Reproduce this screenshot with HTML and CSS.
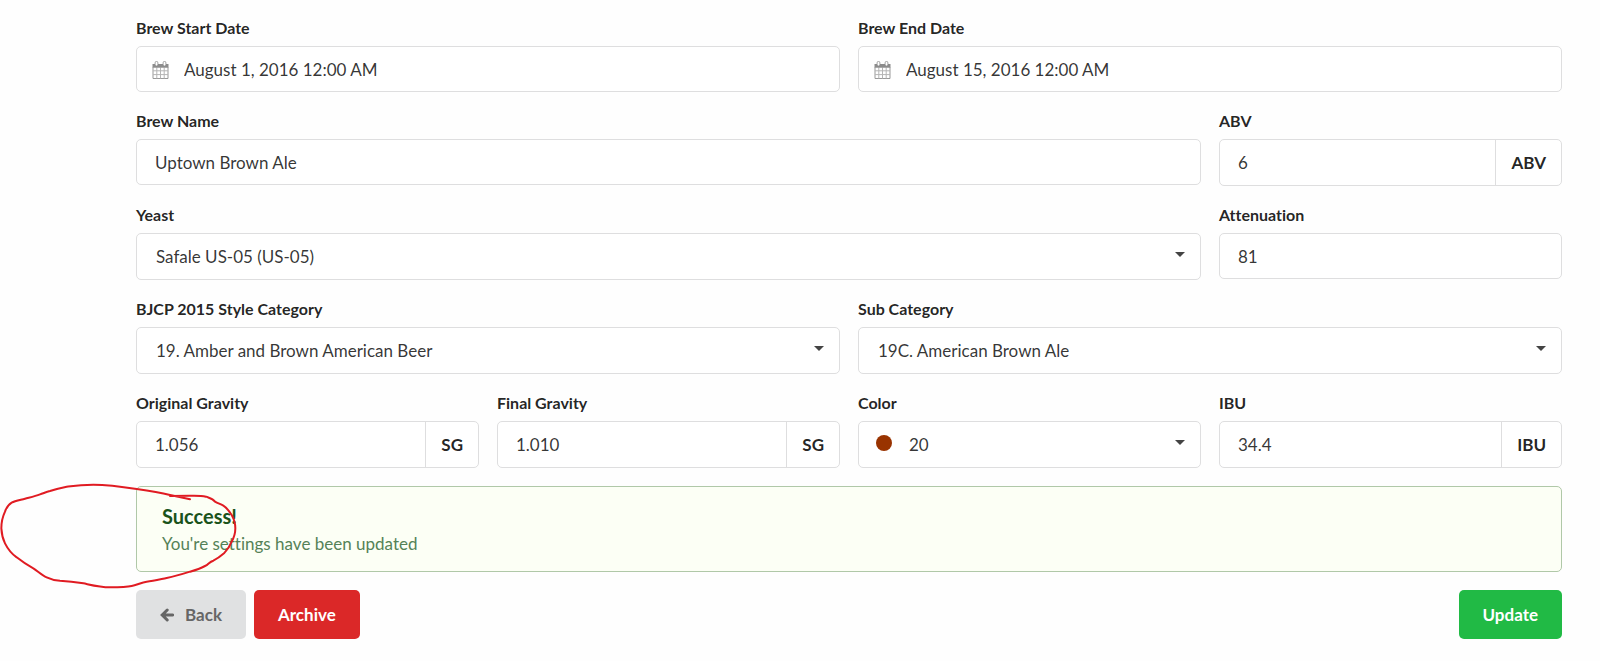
FILE: index.html
```
<!DOCTYPE html>
<html lang="en">
<head>
  <meta charset="UTF-8">
  <meta name="viewport" content="width=device-width, initial-scale=1.0">
  <title>Brew Settings</title>
  <link rel="stylesheet" href="styles.css">
</head>
<body>

<form class="brew-form">

  <!-- dates -->
  <div class="fields">
    <div class="field half">
      <label for="startDate">Brew Start Date</label>
      <div class="input icon-input">
        <svg class="calendar" viewBox="0 0 17 18" aria-hidden="true">
          <path class="sheet" d="M1 6h15v11.5H1z"/>
          <path class="grid" d="M1 9.8h15M1 13.6h15M4.8 6v11.5M8.5 6v11.5M12.2 6v11.5"/>
          <path class="top" d="M.5 3h16v3.5H.5z"/>
          <path class="ring" d="M3.1 1.8a1.4 1.4 0 0 1 2.8 0v1.8a1.4 1.4 0 0 1-2.8 0zM11.1 1.8a1.4 1.4 0 0 1 2.8 0v1.8a1.4 1.4 0 0 1-2.8 0z"/>
        </svg>
        <input type="text" id="startDate" value="August 1, 2016 12:00 AM">
      </div>
    </div>
    <div class="field half">
      <label for="endDate">Brew End Date</label>
      <div class="input icon-input">
        <svg class="calendar" viewBox="0 0 17 18" aria-hidden="true">
          <path class="sheet" d="M1 6h15v11.5H1z"/>
          <path class="grid" d="M1 9.8h15M1 13.6h15M4.8 6v11.5M8.5 6v11.5M12.2 6v11.5"/>
          <path class="top" d="M.5 3h16v3.5H.5z"/>
          <path class="ring" d="M3.1 1.8a1.4 1.4 0 0 1 2.8 0v1.8a1.4 1.4 0 0 1-2.8 0zM11.1 1.8a1.4 1.4 0 0 1 2.8 0v1.8a1.4 1.4 0 0 1-2.8 0z"/>
        </svg>
        <input type="text" id="endDate" value="August 15, 2016 12:00 AM">
      </div>
    </div>
  </div>

  <div class="fields">
    <div class="field wide">
      <label for="brewName">Brew Name</label>
      <div class="input"><input type="text" id="brewName" value="Uptown Brown Ale"></div>
    </div>
    <div class="field">
      <label for="abv">ABV</label>
      <div class="input labeled">
        <input type="text" id="abv" value="6">
        <span class="unit">ABV</span>
      </div>
    </div>
  </div>

  <div class="fields">
    <div class="field wide">
      <label for="yeast">Yeast</label>
      <div class="dropdown">
        <select id="yeast"><option>Safale US-05 (US-05)</option></select>
      </div>
    </div>
    <div class="field">
      <label for="attenuation">Attenuation</label>
      <div class="input"><input type="text" id="attenuation" value="81"></div>
    </div>
  </div>

  <!-- style -->
  <div class="fields">
    <div class="field half">
      <label for="category">BJCP 2015 Style Category</label>
      <div class="dropdown">
        <select id="category"><option>19. Amber and Brown American Beer</option></select>
      </div>
    </div>
    <div class="field half">
      <label for="subCategory">Sub Category</label>
      <div class="dropdown">
        <select id="subCategory"><option>19C. American Brown Ale</option></select>
      </div>
    </div>
  </div>

  <div class="fields">
    <div class="field">
      <label for="og">Original Gravity</label>
      <div class="input labeled">
        <input type="text" id="og" value="1.056">
        <span class="unit">SG</span>
      </div>
    </div>
    <div class="field">
      <label for="fg">Final Gravity</label>
      <div class="input labeled">
        <input type="text" id="fg" value="1.010">
        <span class="unit">SG</span>
      </div>
    </div>
    <div class="field">
      <label for="color">Color</label>
      <div class="dropdown color">
        <span class="swatch"></span>
        <select id="color"><option>20</option></select>
      </div>
    </div>
    <div class="field">
      <label for="ibu">IBU</label>
      <div class="input labeled">
        <input type="text" id="ibu" value="34.4">
        <span class="unit">IBU</span>
      </div>
    </div>
  </div>

  <div class="message">
    <div class="header">Success!</div>
    <p>You're settings have been updated</p>
    <!-- hand drawn circle -->
    <svg class="scribble" viewBox="0 0 720 360" aria-hidden="true">
      <path d="M570 88L510 75C480 68 450 63 410 57C360 49 320 44 280 44C240 44 215 48 200 50C180 54 165 58 150 63C138 66 130 70 120 73C105 79 90 82 75 86C60 90 45 92 35 98C22 106 18 116 15 125C8 140 4 155 4 175C5 192 8 206 15 220C24 238 36 252 50 262C66 275 82 285 100 295C114 304 126 316 140 322C152 328 165 331 180 332C205 333 228 336 250 340C278 346 300 352 330 352C355 352 378 352 395 348C410 345 425 337 440 335C460 333 480 328 500 324C525 319 548 312 570 305C588 300 604 294 615 288C626 283 628 275 640 272C652 266 664 257 672 250C682 240 690 228 695 215C702 203 706 190 706 175C706 158 702 147 695 135C688 124 680 113 670 107C661 102 654 100 645 95C638 85 628 84 618 80C602 76 586 77 570 77L510 78"/>
    </svg>
  </div>

  <div class="actions">
    <button type="button" class="btn back">
      <svg class="arrow" viewBox="0 0 14 14" aria-hidden="true">
        <path d="M12.6 7H2.5M7.2 2L2.2 7L7.2 12"/>
      </svg>
      Back
    </button>
    <button type="button" class="btn archive">Archive</button>
    <button type="submit" class="btn update">Update</button>
  </div>

</form>

</body>
</html>
```
FILE: styles.css
```
* {
  box-sizing: border-box;
}

body {
  margin: 0;
  background: #fefefe;
  color: rgba(0, 0, 0, 0.8);
  font-family: Lato, sans-serif;
  font-size: 17px;
  font-variant-ligatures: none;
}

.brew-form {
  display: flex;
  flex-direction: column;
  gap: 18px;
  padding: 17px 38px 22px 136px;
}

.fields {
  display: grid;
  grid-template-columns: repeat(4, 1fr);
  align-items: start;
  gap: 18px;
}

.field {
  min-width: 0;
}

.field.half {
  grid-column: span 2;
}

.field.wide {
  grid-column: span 3;
}

.field label {
  display: block;
  margin-bottom: 7px;
  color: rgba(0, 0, 0, 0.87);
  font-size: 16px;
  font-weight: bold;
  line-height: 22px;
}

.input,
.dropdown {
  position: relative;
  display: flex;
  height: 46px;
  background: #fff;
  border: 1px solid #dededf;
  border-radius: 5px;
}

.dropdown,
.input.labeled {
  height: 47px;
  padding-bottom: 1px;
}

.input input,
.dropdown select {
  flex: 1;
  min-width: 0;
  margin: 0;
  padding: 0 18px;
  border: none;
  outline: none;
  background: transparent;
  color: inherit;
  font-family: inherit;
  font-size: 17px;
}

.dropdown select {
  appearance: none;
  padding-left: 19px;
}

/* caret */
.dropdown::after {
  content: "";
  position: absolute;
  top: 18px;
  right: 15px;
  border: 5px solid transparent;
  border-top-color: #444;
  border-bottom: none;
  pointer-events: none;
}

.icon-input input {
  padding-left: 47px;
}

.calendar {
  position: absolute;
  top: 14px;
  left: 15px;
  width: 17px;
  height: 18px;
}

.calendar .sheet {
  fill: #fff;
  stroke: #999;
}

.calendar .grid {
  fill: none;
  stroke: #b5b5b5;
}

.calendar .top {
  fill: #8c8c8c;
}

.calendar .ring {
  fill: #fff;
  stroke: #8c8c8c;
  stroke-width: 0.8;
}

.unit {
  display: flex;
  align-items: center;
  margin-bottom: -1px;
  padding: 0 15px 1px;
  border-left: 1px solid #dededf;
  color: rgba(0, 0, 0, 0.87);
  font-weight: bold;
}

.dropdown.color select {
  padding-left: 50px;
}

.swatch {
  position: absolute;
  top: 13px;
  left: 17px;
  width: 16px;
  height: 16px;
  border-radius: 50%;
  background: #993300;
}

.message {
  position: relative;
  padding: 15px 25px 13px;
  border: 1px solid #b0c8a8;
  border-radius: 5px;
  background: #fcfff5;
  color: #558257;
}

.message .header {
  color: #1a531b;
  font-size: 20px;
  font-weight: bold;
  line-height: 28px;
}

.message p {
  margin: 0;
  line-height: 28px;
}

.scribble {
  position: absolute;
  top: -17px;
  left: -137px;
  width: 240px;
  height: 120px;
  pointer-events: none;
}

.scribble path {
  fill: none;
  stroke: #e01b22;
  stroke-width: 6;
  stroke-linejoin: round;
  stroke-linecap: round;
}

.actions {
  display: flex;
  gap: 8px;
}

.btn {
  display: flex;
  align-items: center;
  height: 49px;
  padding: 0 24px;
  border: none;
  border-radius: 5px;
  color: #fff;
  font-family: inherit;
  font-size: 17px;
  font-weight: bold;
  cursor: pointer;
}

.back {
  gap: 11px;
  background: #e0e1e2;
  color: #666;
}

.arrow {
  width: 14px;
  height: 14px;
  fill: none;
  stroke: #666;
  stroke-width: 3;
  stroke-linecap: round;
}

.archive {
  background: #db2828;
}

.update {
  margin-left: auto;
  background: #21ba45;
}
```
